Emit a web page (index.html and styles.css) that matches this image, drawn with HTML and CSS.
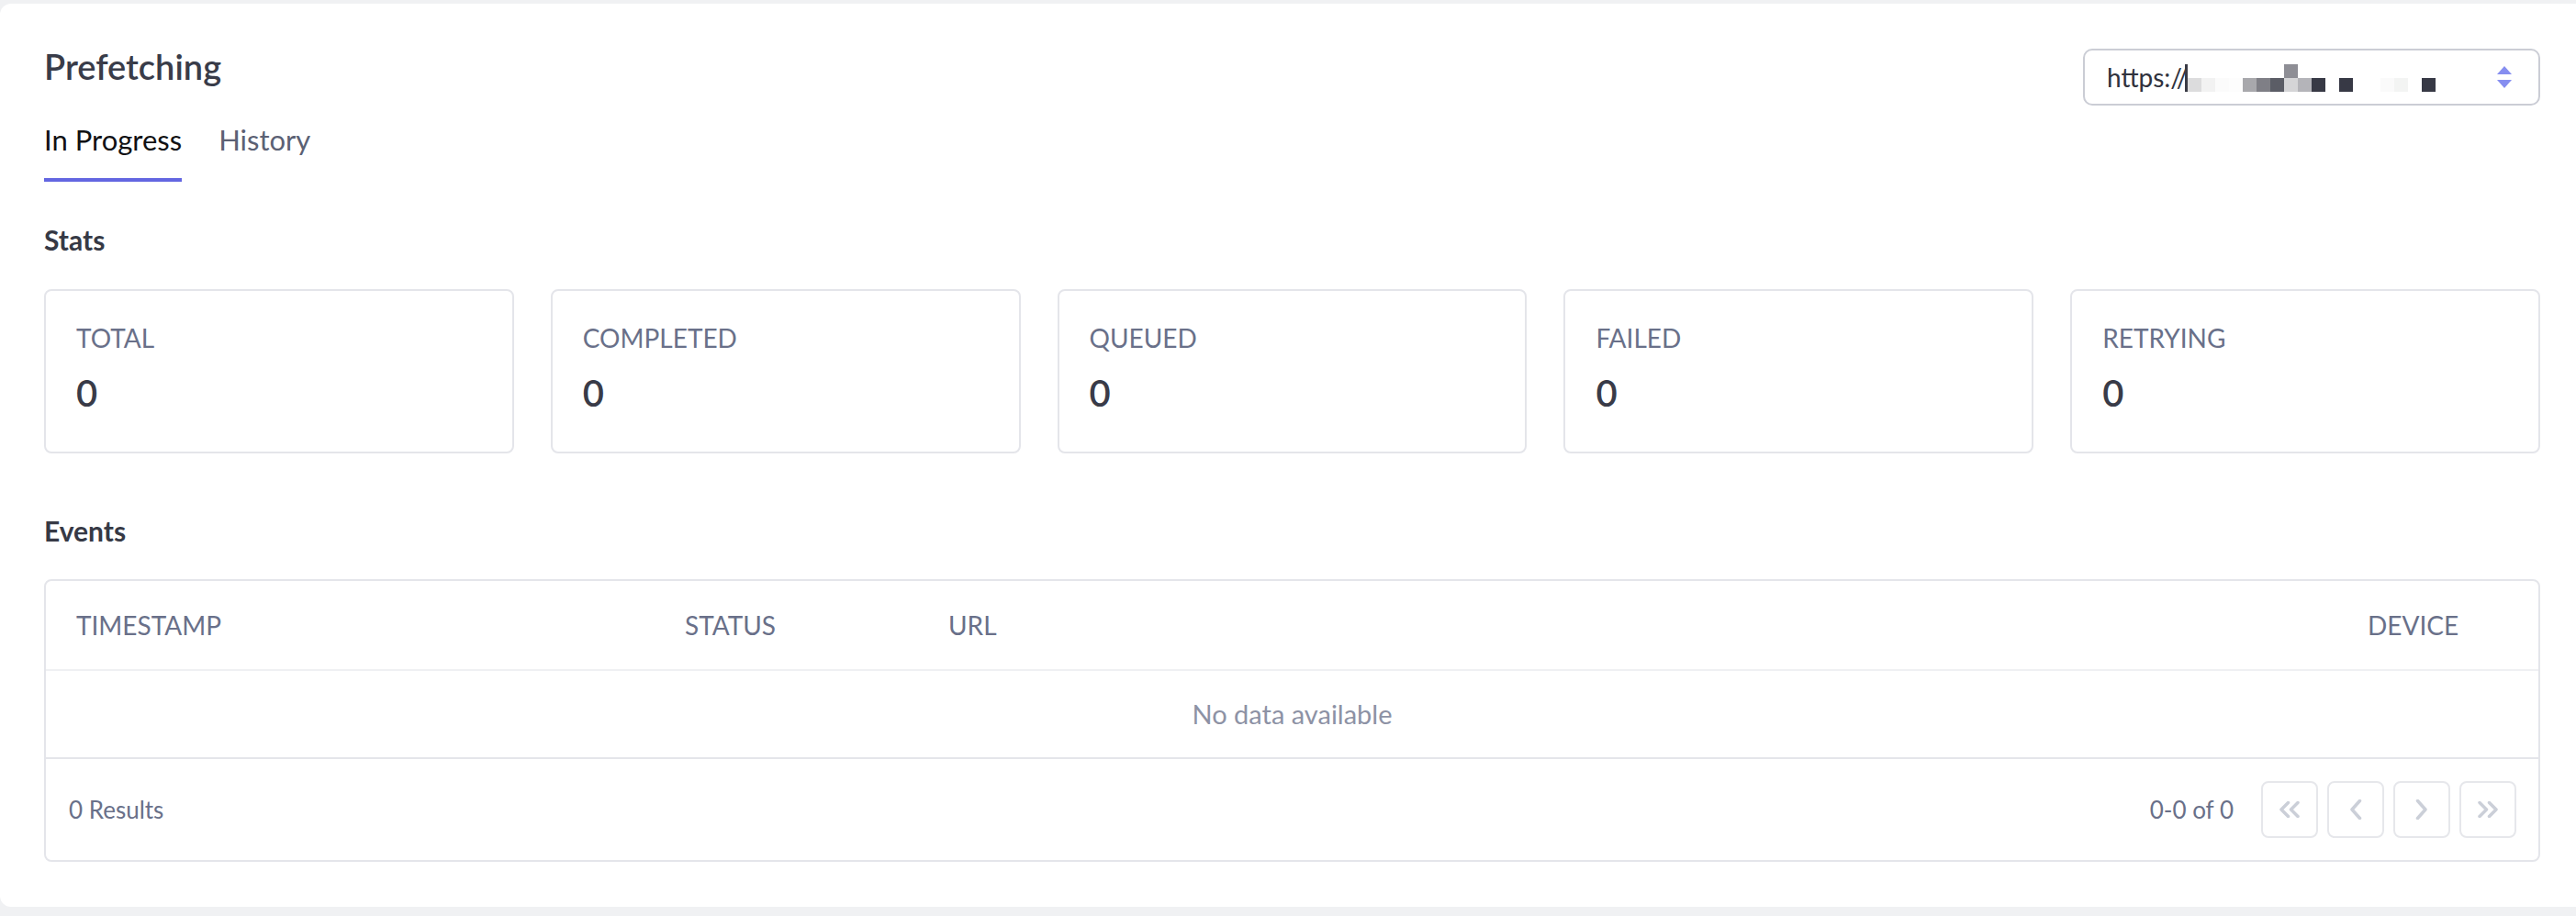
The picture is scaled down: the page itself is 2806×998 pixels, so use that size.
FILE: index.html
```html
<!DOCTYPE html>
<html lang="en">
<head>
<meta charset="utf-8">
<title>Prefetching</title>
<link rel="stylesheet" href="styles.css">
</head>
<body>
<main class="panel">
  <header class="page-header">
    <div class="heading-block">
      <h1 class="title">Prefetching</h1>
      <nav class="tabs">
        <span class="tab tab-active">In Progress</span>
        <span class="tab">History</span>
      </nav>
    </div>
    <div class="select">
      <span class="select-value">https://<svg class="mosaic" width="273" height="30" viewBox="0 0 273 30" aria-hidden="true">
          <rect x="0" y="0" width="3" height="30" fill="#3a3b45"/>
          <rect x="108" y="0" width="15" height="15" fill="#8e8e95"/>
          <rect x="3" y="15" width="15" height="15" fill="#dcdcdd"/>
          <rect x="18" y="15" width="15" height="15" fill="#f2f2f2"/>
          <rect x="33" y="15" width="15" height="15" fill="#fbfbfb"/>
          <rect x="48" y="15" width="15" height="15" fill="#fdfdfd"/>
          <rect x="63" y="15" width="15" height="15" fill="#a8a8ac"/>
          <rect x="78" y="15" width="15" height="15" fill="#7f7f86"/>
          <rect x="93" y="15" width="15" height="15" fill="#5b5d66"/>
          <rect x="108" y="15" width="15" height="15" fill="#d5d5d7"/>
          <rect x="123" y="15" width="15" height="15" fill="#b4b4b9"/>
          <rect x="138" y="15" width="15" height="15" fill="#373945"/>
          <rect x="168" y="15" width="15" height="15" fill="#373945"/>
          <rect x="213" y="15" width="15" height="15" fill="#fafafa"/>
          <rect x="228" y="15" width="15" height="15" fill="#f3f4f3"/>
          <rect x="258" y="15" width="15" height="15" fill="#373945"/>
        </svg></span>
      <svg class="select-arrows" width="16" height="24" viewBox="0 0 16 24" aria-hidden="true">
        <polygon points="8,0 16,9 0,9" fill="#868ef0"/>
        <polygon points="0,15 16,15 8,24" fill="#868ef0"/>
      </svg>
    </div>
  </header>

  <h2 class="section-title stats-title">Stats</h2>
  <section class="stats">
    <div class="stat-card"><div class="stat-label">TOTAL</div><div class="stat-value">0</div></div>
    <div class="stat-card"><div class="stat-label">COMPLETED</div><div class="stat-value">0</div></div>
    <div class="stat-card"><div class="stat-label">QUEUED</div><div class="stat-value">0</div></div>
    <div class="stat-card"><div class="stat-label">FAILED</div><div class="stat-value">0</div></div>
    <div class="stat-card"><div class="stat-label">RETRYING</div><div class="stat-value">0</div></div>
  </section>

  <h2 class="section-title events-title">Events</h2>
  <section class="table">
    <div class="table-head">
      <div class="th">TIMESTAMP</div>
      <div class="th">STATUS</div>
      <div class="th">URL</div>
      <div class="th">DEVICE</div>
    </div>
    <div class="table-empty">No data available</div>
    <div class="table-footer">
      <span class="results">0 Results</span>
      <div class="pager">
        <span class="range">0-0 of 0</span>
        <div class="pager-buttons">
          <button class="page-btn" type="button" aria-label="First page">
            <svg width="24" height="18" viewBox="0 0 24 18"><polyline points="10.5,1.5 3,9 10.5,16.5"/><polyline points="21,1.5 13.5,9 21,16.5"/></svg>
          </button>
          <button class="page-btn" type="button" aria-label="Previous page">
            <svg width="14" height="22" viewBox="0 0 14 22"><polyline points="11.5,1.5 3,11 11.5,20.5"/></svg>
          </button>
          <button class="page-btn" type="button" aria-label="Next page">
            <svg width="14" height="22" viewBox="0 0 14 22"><polyline points="2.5,1.5 11,11 2.5,20.5"/></svg>
          </button>
          <button class="page-btn" type="button" aria-label="Last page">
            <svg width="24" height="18" viewBox="0 0 24 18"><polyline points="3,1.5 10.5,9 3,16.5"/><polyline points="13.5,1.5 21,9 13.5,16.5"/></svg>
          </button>
        </div>
      </div>
    </div>
  </section>
</main>
</body>
</html>
```

FILE: styles.css
```css
* {
  box-sizing: border-box;
}

html, body {
  margin: 0;
  padding: 0;
  overflow: hidden;
}

body {
  background: #f0f1f3;
  font-family: "Lato", "Noto Sans", sans-serif;
  color: #353844;
}

.panel {
  margin-top: 4px;
  height: 984px;
  background: #ffffff;
  border-radius: 12px 0 0 12px;
  padding: 45px 39px 49px 48px;
}

.page-header {
  display: flex;
  justify-content: space-between;
  align-items: flex-start;
}

.title {
  margin: 0;
  font-size: 38px;
  line-height: 46px;
  font-weight: 600;
  color: #393c49;
}

.tabs {
  display: flex;
  gap: 40px;
  margin-top: 37px;
}

.tab {
  font-size: 31px;
  line-height: 40px;
  color: #5b6174;
  padding-bottom: 22px;
  border-bottom: 4px solid transparent;
}

.tab-active {
  color: #111114;
  border-bottom-color: #6366e1;
}

.select {
  margin-top: 4px;
  width: 498px;
  height: 62px;
  border: 2px solid #cbcdd5;
  border-radius: 10px;
  display: flex;
  align-items: center;
  justify-content: space-between;
  padding: 0 29px 0 24px;
}

.select-value {
  font-size: 28px;
  line-height: 40px;
  color: #30323d;
  white-space: nowrap;
}

.mosaic {
  vertical-align: -5px;
  margin-left: -3px;
}

.section-title {
  margin: 0;
  font-size: 30px;
  line-height: 36px;
  font-weight: 700;
  color: #363945;
}

.stats-title {
  margin-top: 45px;
}

.stats {
  margin-top: 36px;
  display: grid;
  grid-template-columns: repeat(5, 1fr);
  gap: 40px;
}

.stat-card {
  height: 179px;
  border: 2px solid #e4e5ea;
  border-radius: 8px;
  padding: 31px 33px 0;
}

.stat-label {
  font-size: 28px;
  line-height: 40px;
  color: #697089;
}

.stat-value {
  margin-top: 14px;
  font-size: 40px;
  line-height: 52px;
  font-weight: 600;
  color: #393b48;
}

.events-title {
  margin-top: 66px;
}

.table {
  margin-top: 35px;
  border: 2px solid #e4e5ea;
  border-radius: 8px;
}

.table-head {
  display: grid;
  grid-template-columns: 663px 287px 1fr 219px;
  height: 98px;
  border-bottom: 2px solid #eff0f3;
}

.th {
  padding-left: 33px;
  font-size: 28px;
  line-height: 96px;
  color: #697089;
}

.table-empty {
  height: 96px;
  border-bottom: 2px solid #e4e5ea;
  text-align: center;
  font-size: 29px;
  line-height: 94px;
  color: #8d92a5;
}

.table-footer {
  height: 110px;
  display: flex;
  align-items: center;
  justify-content: space-between;
  padding: 0 24px 0 25px;
}

.results,
.range {
  font-size: 26px;
  line-height: 36px;
  color: #697089;
}

.pager {
  display: flex;
  align-items: center;
  gap: 30px;
}

.pager-buttons {
  display: flex;
  gap: 10px;
}

.page-btn {
  width: 62px;
  height: 62px;
  padding: 0;
  background: #ffffff;
  border: 2px solid #e6e7eb;
  border-radius: 8px;
  display: flex;
  align-items: center;
  justify-content: center;
}

.page-btn svg polyline {
  fill: none;
  stroke: #cbcfd8;
  stroke-width: 3.5;
  stroke-linecap: round;
  stroke-linejoin: round;
}
```
